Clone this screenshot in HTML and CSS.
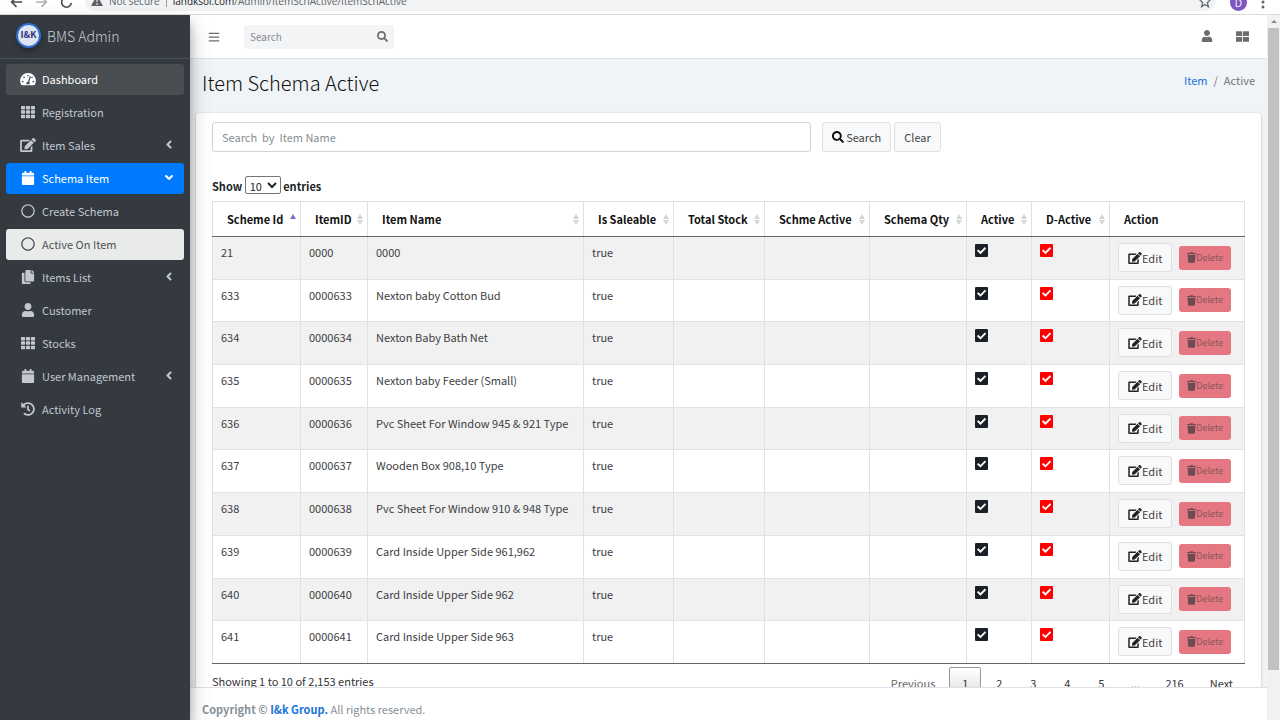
FILE: index.html
```
<!DOCTYPE html>
<html lang="en">
<head>
    <meta charset="UTF-8">
    <meta name="viewport" content="width=device-width, initial-scale=1.0">
    <title>Item Schema Active</title>
    <link rel="stylesheet" href="styles.css">
</head>
<body>
    <!-- icons shared by the menu, the navbar and the table -->
    <svg class="sprite" aria-hidden="true">
        <symbol id="i-gauge" viewBox="0 0 576 512"><path d="M288 32C129 32 0 161 0 320c0 53 14 102 39 145 6 9 16 15 27 15h444c11 0 21-6 27-15 25-43 39-92 39-145C576 161 447 32 288 32zm0 64c18 0 32 14 32 32s-14 32-32 32-32-14-32-32 14-32 32-32zM96 384c-18 0-32-14-32-32s14-32 32-32 32 14 32 32-14 32-32 32zm48-160c-18 0-32-14-32-32s14-32 32-32 32 14 32 32-14 32-32 32zm247-39l-61 184c13 12 22 28 22 47 0 12-3 23-9 32H233c-5-9-9-20-9-32 0-34 27-62 61-64l61-183c4-12 18-19 30-15s19 18 15 31zm41-25c18 0 32 14 32 32s-14 32-32 32-20-8-26-20l15-40c3-2 7-4 11-4zm48 224c-18 0-32-14-32-32s14-32 32-32 32 14 32 32-14 32-32 32z"/></symbol>
        <symbol id="i-grid" viewBox="0 0 512 512"><path d="M24 32h102c13 0 24 11 24 24v80c0 13-11 24-24 24H24c-13 0-24-11-24-24V56c0-13 11-24 24-24zm181 0h102c13 0 24 11 24 24v80c0 13-11 24-24 24H205c-13 0-24-11-24-24V56c0-13 11-24 24-24zm181 0h102c13 0 24 11 24 24v80c0 13-11 24-24 24H386c-13 0-24-11-24-24V56c0-13 11-24 24-24zM24 192h102c13 0 24 11 24 24v80c0 13-11 24-24 24H24c-13 0-24-11-24-24v-80c0-13 11-24 24-24zm181 0h102c13 0 24 11 24 24v80c0 13-11 24-24 24H205c-13 0-24-11-24-24v-80c0-13 11-24 24-24zm181 0h102c13 0 24 11 24 24v80c0 13-11 24-24 24H386c-13 0-24-11-24-24v-80c0-13 11-24 24-24zM24 352h102c13 0 24 11 24 24v80c0 13-11 24-24 24H24c-13 0-24-11-24-24v-80c0-13 11-24 24-24zm181 0h102c13 0 24 11 24 24v80c0 13-11 24-24 24H205c-13 0-24-11-24-24v-80c0-13 11-24 24-24zm181 0h102c13 0 24 11 24 24v80c0 13-11 24-24 24H386c-13 0-24-11-24-24v-80c0-13 11-24 24-24z"/></symbol>
        <symbol id="i-edit" viewBox="0 0 576 512"><path d="M402.600 83.200l90.200 90.200c3.800 3.800 3.800 10 0 13.800L274.400 405.600l-92.800 10.300c-12.400 1.400-22.900-9.100-21.500-21.500l10.300-92.800L388.800 83.200c3.800-3.800 10-3.800 13.800 0zm162-22.900l-48.800-48.800c-15.200-15.200-39.900-15.200-55.200 0l-35.400 35.400c-3.800 3.800-3.800 10 0 13.800l90.200 90.200c3.800 3.800 10 3.800 13.800 0l35.400-35.400c15.200-15.300 15.200-40 0-55.200zM384 346.200V448H64V128h229.800c3.200 0 6.200-1.300 8.500-3.500l40-40c7.600-7.600 2.200-20.500-8.500-20.500H48C21.500 64 0 85.500 0 112v352c0 26.500 21.500 48 48 48h352c26.500 0 48-21.500 48-48V306.200c0-10.700-12.900-16-20.500-8.500l-40 40c-2.200 2.300-3.500 5.300-3.500 8.500z"/></symbol>
        <symbol id="i-calendar" viewBox="0 0 448 512"><path d="M12 192h424c6.600 0 12 5.400 12 12v260c0 26.500-21.500 48-48 48H48c-26.500 0-48-21.500-48-48V204c0-6.600 5.400-12 12-12zm436-44v-36c0-26.500-21.500-48-48-48h-48V12c0-6.600-5.400-12-12-12h-40c-6.600 0-12 5.400-12 12v52H160V12c0-6.600-5.400-12-12-12h-40c-6.600 0-12 5.400-12 12v52H48C21.500 64 0 85.500 0 112v36c0 6.600 5.400 12 12 12h424c6.600 0 12-5.400 12-12z"/></symbol>
        <symbol id="i-circle" viewBox="0 0 512 512"><path d="M256 8C119 8 8 119 8 256s111 248 248 248 248-111 248-248S393 8 256 8zm0 448c-110.500 0-200-89.500-200-200S145.500 56 256 56s200 89.500 200 200-89.500 200-200 200z"/></symbol>
        <symbol id="i-copy" viewBox="0 0 448 512"><path d="M320 448v40c0 13.300-10.700 24-24 24H24c-13.300 0-24-10.700-24-24V120c0-13.300 10.700-24 24-24h72v296c0 30.900 25.100 56 56 56h168zm0-344V0H152c-13.300 0-24 10.700-24 24v368c0 13.300 10.700 24 24 24h272c13.300 0 24-10.700 24-24V128H344c-13.200 0-24-10.800-24-24zm121-31L375 7c-4.500-4.500-10.600-7-17-7h-6v96h96v-6.100c0-6.300-2.500-12.400-7-16.900z"/></symbol>
        <symbol id="i-user" viewBox="0 0 448 512"><path d="M224 256c70.700 0 128-57.300 128-128S294.700 0 224 0 96 57.300 96 128s57.300 128 128 128zm89.600 32h-16.700c-22.200 10.200-46.900 16-72.900 16s-50.600-5.800-72.900-16h-16.700C60.200 288 0 348.200 0 422.400V464c0 26.500 21.500 48 48 48h352c26.500 0 48-21.500 48-48v-41.600c0-74.200-60.200-134.400-134.400-134.400z"/></symbol>
        <symbol id="i-history" viewBox="0 0 512 512"><path d="M504 255.500c.3 136.600-111.200 248.400-247.800 248.500-59 0-113.200-20.500-155.800-54.900-11.100-8.900-11.900-25.500-1.800-35.600l11.300-11.300c8.600-8.600 22.400-9.600 31.900-2C173.100 425.100 212.800 440 256 440c101.700 0 184-82.300 184-184 0-101.700-82.300-184-184-184-48.800 0-93.100 19-126.100 49.900l50.800 50.800c10.100 10.100 2.900 27.300-11.300 27.300H24c-8.800 0-16-7.200-16-16V38.600c0-14.300 17.200-21.400 27.300-11.300l49.400 49.400C129.200 34.100 189.600 8 256 8c136.800 0 247.700 110.800 248 247.500zm-180.900 78.800l9.800-12.600c8.100-10.500 6.300-25.500-4.200-33.700L288 256.300V152c0-13.300-10.700-24-24-24h-16c-13.300 0-24 10.700-24 24v135.700l65.400 50.900c10.500 8.100 25.500 6.300 33.700-4.300z"/></symbol>
        <symbol id="i-left" viewBox="0 0 256 512"><path d="M31.700 239l136-136c9.400-9.400 24.600-9.400 33.900 0l22.600 22.600c9.400 9.400 9.400 24.600 0 33.900L127.900 256l96.400 96.400c9.400 9.400 9.400 24.600 0 33.900L201.700 409c-9.400 9.400-24.600 9.400-33.900 0l-136-136c-9.500-9.400-9.500-24.600-.1-34z"/></symbol>
        <symbol id="i-bars" viewBox="0 0 448 512"><path d="M16 132h416c9 0 16-7 16-16V92c0-9-7-16-16-16H16C7 76 0 83 0 92v24c0 9 7 16 16 16zm0 160h416c9 0 16-7 16-16v-24c0-9-7-16-16-16H16c-9 0-16 7-16 16v24c0 9 7 16 16 16zm0 160h416c9 0 16-7 16-16v-24c0-9-7-16-16-16H16c-9 0-16 7-16 16v24c0 9 7 16 16 16z"/></symbol>
        <symbol id="i-search" viewBox="0 0 512 512"><path d="M505 442.700L405.300 343c-4.500-4.500-10.600-7-17-7H372c27.600-35.300 44-79.700 44-128C416 93.100 322.900 0 208 0S0 93.100 0 208s93.100 208 208 208c48.300 0 92.700-16.400 128-44v16.300c0 6.400 2.500 12.500 7 17l99.700 99.700c9.400 9.400 24.600 9.400 33.900 0l28.300-28.300c9.400-9.400 9.400-24.600.1-34zM208 336c-70.700 0-128-57.200-128-128 0-70.700 57.200-128 128-128 70.700 0 128 57.200 128 128 0 70.700-57.200 128-128 128z"/></symbol>
        <symbol id="i-large" viewBox="0 0 512 512"><path d="M24 48h192c13 0 24 11 24 24v144c0 13-11 24-24 24H24c-13 0-24-11-24-24V72c0-13 11-24 24-24zm272 0h192c13 0 24 11 24 24v144c0 13-11 24-24 24H296c-13 0-24-11-24-24V72c0-13 11-24 24-24zM24 272h192c13 0 24 11 24 24v144c0 13-11 24-24 24H24c-13 0-24-11-24-24V296c0-13 11-24 24-24zm272 0h192c13 0 24 11 24 24v144c0 13-11 24-24 24H296c-13 0-24-11-24-24V296c0-13 11-24 24-24z"/></symbol>
        <symbol id="i-trash" viewBox="0 0 448 512"><path d="M432 32H312l-9.400-18.700A24 24 0 0 0 281.100 0H166.800a23.700 23.700 0 0 0-21.400 13.300L136 32H16A16 16 0 0 0 0 48v32a16 16 0 0 0 16 16h416a16 16 0 0 0 16-16V48a16 16 0 0 0-16-16zM32 128l21.200 339a48 48 0 0 0 47.900 45h245.800a48 48 0 0 0 47.900-45L416 128z"/></symbol>
    </svg>

    <div class="browser">
        <svg class="nav-arrow" viewBox="0 0 16 16"><path d="M15 8H2M8 2L2 8l6 6"/></svg>
        <svg class="nav-arrow faded" viewBox="0 0 16 16"><path d="M1 8h13M8 2l6 6-6 6"/></svg>
        <svg class="nav-arrow" viewBox="0 0 16 16"><path d="M13 5A6 6 0 1 0 14 9"/></svg>
        <div class="address">
            <svg class="warn" viewBox="0 0 12 12"><path d="M6 0l6 11H0z"/><path class="mark" d="M6 4v3M6 8v2"/></svg>
            <span>Not secure</span>
            <span class="divider"></span>
            <span class="url"><b>landksol.com</b>/Admin/ItemSchActive/ItemSchActive</span>
            <svg class="star" viewBox="0 0 24 24"><path d="M12 3l3 6 6 1-5 5 2 7-6-4-6 4 2-7-5-5 6-1z"/></svg>
        </div>
        <span class="profile">D</span>
        <svg class="dots" viewBox="0 0 4 16"><circle cx="2" cy="3" r="1.500"/><circle cx="2" cy="8" r="1.500"/><circle cx="2" cy="13" r="1.500"/></svg>
    </div>

    <div class="wrapper">
        <aside class="sidebar">
            <a class="brand" href="#"><span class="logo">I&amp;K</span>BMS Admin</a>
            <nav class="menu">
                <a class="hover" href="#"><svg class="icon"><use href="#i-gauge"/></svg>Dashboard</a>
                <a href="#"><svg class="icon"><use href="#i-grid"/></svg>Registration</a>
                <a href="#"><svg class="icon"><use href="#i-edit"/></svg>Item Sales<svg class="angle"><use href="#i-left"/></svg></a>
                <a class="active" href="#"><svg class="icon"><use href="#i-calendar"/></svg>Schema Item<svg class="angle open"><use href="#i-left"/></svg></a>
                <a href="#"><svg class="icon"><use href="#i-circle"/></svg>Create Schema</a>
                <a class="current" href="#"><svg class="icon"><use href="#i-circle"/></svg>Active On Item</a>
                <a href="#"><svg class="icon"><use href="#i-copy"/></svg>Items List<svg class="angle"><use href="#i-left"/></svg></a>
                <a href="#"><svg class="icon"><use href="#i-user"/></svg>Customer</a>
                <a href="#"><svg class="icon"><use href="#i-grid"/></svg>Stocks</a>
                <a href="#"><svg class="icon"><use href="#i-calendar"/></svg>User Management<svg class="angle"><use href="#i-left"/></svg></a>
                <a href="#"><svg class="icon"><use href="#i-history"/></svg>Activity Log</a>
            </nav>
        </aside>

        <div class="main">
            <header class="navbar">
                <button class="icon-btn" type="button" aria-label="Toggle menu"><svg><use href="#i-bars"/></svg></button>
                <form class="nav-search">
                    <input type="text" placeholder="Search" aria-label="Search">
                    <button class="icon-btn" type="button" aria-label="Search"><svg><use href="#i-search"/></svg></button>
                </form>
                <div class="nav-right">
                    <a href="#" aria-label="Account"><svg><use href="#i-user"/></svg></a>
                    <a href="#" aria-label="Apps"><svg class="apps"><use href="#i-large"/></svg></a>
                </div>
            </header>

            <div class="content">
                <div class="content-header">
                    <h1>Item Schema Active</h1>
                    <div class="breadcrumb"><a href="#">Item</a><span>/</span>Active</div>
                </div>
                <section class="card">
                    <form class="filter">
                        <input type="text" placeholder="Search  by  Item Name" aria-label="Search by item name">
                        <button class="btn" type="button"><svg><use href="#i-search"/></svg>Search</button>
                        <button class="btn" type="button">Clear</button>
                    </form>
                    <label class="length">Show
                        <select>
                            <option>10</option>
                            <option>25</option>
                            <option>50</option>
                        </select>
                        entries</label>
                    <table>
                        <colgroup>
                            <col class="c-id"><col class="c-item"><col><col class="c-sale"><col class="c-stock">
                            <col class="c-schme"><col class="c-qty"><col class="c-active"><col class="c-dactive"><col class="c-action">
                        </colgroup>
                        <thead>
                            <tr>
                                <th class="sort asc">Scheme Id</th>
                                <th class="sort">ItemID</th>
                                <th class="sort">Item Name</th>
                                <th class="sort">Is Saleable</th>
                                <th class="sort">Total Stock</th>
                                <th class="sort">Schme Active</th>
                                <th class="sort">Schema Qty</th>
                                <th class="sort">Active</th>
                                <th class="sort">D-Active</th>
                                <th>Action</th>
                            </tr>
                        </thead>
                        <tbody id="rows"></tbody>
                    </table>
                    <div class="table-foot">
                        <div>Showing 1 to 10 of 2,153 entries</div>
                        <div class="pages">
                            <button class="prev" type="button">Previous</button>
                            <button class="on" type="button">1</button>
                            <button type="button">2</button>
                            <button type="button">3</button>
                            <button type="button">4</button>
                            <button type="button">5</button>
                            <span>…</span>
                            <button type="button">216</button>
                            <button type="button">Next</button>
                        </div>
                    </div>
                </section>
            </div>

            <footer><strong>Copyright © <a href="#">I&amp;k Group.</a></strong> All rights reserved.</footer>
        </div>

        <div class="scrollbar"><span class="up"></span><span class="thumb"></span></div>
    </div>

    <script src="script.js"></script>
</body>
</html>
```
FILE: styles.css
```
* {
    box-sizing: border-box;
}

body {
    margin: 0;
    height: 100vh;
    display: flex;
    flex-direction: column;
    overflow: hidden;
    font-family: "Noto Sans CJK SC", "Open Sans", sans-serif;
    font-size: 11px;
    line-height: 18px;
    color: #212529;
}

a {
    color: #1a73d9;
    text-decoration: none;
}

button,
input,
select {
    font-family: inherit;
    font-size: inherit;
    line-height: inherit;
    color: inherit;
}

svg {
    fill: currentColor;
    flex: none;
}

.sprite {
    display: none;
}

/* browser bar */
.browser {
    flex: none;
    height: 15px;
    display: flex;
    align-items: flex-end;
    gap: 12px;
    padding: 0 15px 3px 10px;
    overflow: hidden;
    background: #fff;
    border-bottom: 1px solid #dcdcdc;
    font-family: "Open Sans", sans-serif;
    font-size: 10px;
    color: #5f6368;
}

.nav-arrow {
    width: 13px;
    height: 18px;
    fill: none;
    stroke: #4a4d51;
    stroke-width: 2;
}

.faded {
    stroke: #b0b3b6;
}

.address {
    flex: 1;
    height: 20px;
    display: flex;
    align-items: center;
    gap: 6px;
    padding: 0 4px 0 6px;
    border-radius: 10px;
    background: #f1f3f4;
}

.warn {
    width: 12px;
    height: 12px;
}

.mark {
    stroke: #fff;
}

.divider {
    width: 1px;
    height: 12px;
    background: #9aa0a6;
}

.url {
    flex: 1;
}

.url b {
    font-weight: 400;
    color: #202124;
}

.star {
    width: 14px;
    height: 14px;
    fill: none;
    stroke: #5f6368;
    stroke-width: 2;
}

.profile {
    width: 17px;
    height: 17px;
    margin: 0 2px;
    border-radius: 50%;
    background: #7e57c2;
    color: #fff;
    text-align: center;
}

.dots {
    width: 4px;
    height: 18px;
}

/* layout */
.wrapper {
    flex: 1;
    min-height: 0;
    display: flex;
}

.sidebar {
    position: relative;
    z-index: 1;
    flex: none;
    width: 190px;
    background: #343a40;
    color: #c2c7d0;
    box-shadow: 0 10px 20px rgba(0, 0, 0, .25), 0 8px 8px rgba(0, 0, 0, .2);
}

.brand {
    display: flex;
    align-items: center;
    gap: 6px;
    height: 44px;
    padding: 0 16px 2px;
    border-bottom: 1px solid #4b545c;
    color: #c9ccd0;
    font-size: 14px;
    font-weight: 300;
}

.logo {
    width: 25px;
    height: 25px;
    border: 2px solid #2f6fd0;
    border-radius: 50%;
    background: #dfe4f2;
    color: #2c2f7c;
    font-size: 9px;
    font-weight: 700;
    line-height: 19px;
    text-align: center;
    box-shadow: 0 3px 6px rgba(0, 0, 0, .3);
}

.menu {
    display: flex;
    flex-direction: column;
    gap: 2px;
    padding: 5px 6px;
}

.menu a {
    display: flex;
    align-items: center;
    height: 31px;
    padding: 0 10px 2px 14px;
    border-radius: 3px;
    color: #c2c7d0;
}

.menu .icon {
    width: 16px;
    height: 14px;
    margin-right: 6px;
}

.angle {
    width: 10px;
    height: 13px;
    margin-left: auto;
}

.open {
    transform: rotate(-90deg);
}

.menu .hover {
    background: #494e53;
    color: #fff;
}

.menu .active {
    background: #007bff;
    color: #fff;
}

.menu .current {
    background: #e9eaea;
    color: #4c5157;
}

.main {
    flex: 1;
    min-width: 0;
    display: flex;
    flex-direction: column;
}

.navbar {
    flex: none;
    display: flex;
    align-items: center;
    height: 44px;
    padding: 0 18px;
    background: #fff;
    border-bottom: 1px solid #dee2e6;
    color: #6c6c6c;
}

.icon-btn {
    display: flex;
    padding: 0;
    border: 0;
    background: none;
}

.navbar svg {
    width: 12px;
    height: 12px;
}

.navbar .apps {
    width: 13px;
    height: 13px;
}

.nav-search {
    display: flex;
    align-items: center;
    width: 150px;
    height: 24px;
    margin-left: 24px;
    padding: 0 6px;
    border-radius: 3px;
    background: #f2f4f6;
}

.nav-search input {
    flex: 1;
    min-width: 0;
    padding: 0;
    border: 0;
    background: none;
    font-size: 10px;
}

.nav-search svg {
    width: 11px;
    height: 11px;
}

.nav-right {
    display: flex;
    gap: 23px;
    margin-left: auto;
}

.nav-right a {
    display: flex;
    color: #6c6c6c;
}

.content {
    flex: 1;
    min-height: 0;
    overflow: hidden;
    padding: 0 6px;
    background: #f0f4f7;
}

.content-header {
    display: flex;
    justify-content: space-between;
    height: 54px;
    padding: 12px 6px;
}

h1 {
    margin: 0;
    font-size: 20px;
    font-weight: 300;
    line-height: 24px;
    color: #111;
}

.breadcrumb {
    color: #6c757d;
}

.breadcrumb span {
    margin: 0 6px;
}

.card {
    padding: 9px 16px;
    border-radius: 3px;
    background: #fff;
    box-shadow: 0 0 1px rgba(0, 0, 0, .2), 0 1px 3px rgba(0, 0, 0, .2);
}

.filter {
    display: flex;
    gap: 3px;
}

.filter input {
    width: 58%;
    height: 30px;
    margin-right: 8px;
    padding: 0 9px;
    border: 1px solid #ced4da;
    border-radius: 3px;
}

::placeholder {
    color: #868c91;
    white-space: pre;
}

.btn {
    display: inline-flex;
    align-items: center;
    gap: 2px;
    height: 30px;
    padding: 0 9px;
    border: 1px solid #dddfe1;
    border-radius: 3px;
    background: #f8f9fa;
    color: #444;
}

.btn svg {
    width: 12px;
    height: 12px;
    color: #111;
}

.length {
    display: block;
    margin: 24px 0 6px;
    font-weight: 700;
}

.length select {
    width: 36px;
    height: 18px;
    padding: 0;
    border: 1px solid #767676;
    border-radius: 2px;
    background: #fff;
    font-weight: 400;
}

/* table */
table {
    width: 100%;
    height: 463px;
    table-layout: fixed;
    border-collapse: collapse;
    border: 1px solid #dee2e6;
}

.c-id { width: 88px; }
.c-item { width: 67px; }
.c-sale { width: 90px; }
.c-stock { width: 91px; }
.c-schme { width: 105px; }
.c-qty { width: 97px; }
.c-active { width: 65px; }
.c-dactive { width: 78px; }
.c-action { width: 135px; }

th,
td {
    border: 1px solid #dee2e6;
    text-align: left;
    white-space: nowrap;
}

th {
    position: relative;
    height: 35px;
    padding: 0 14px;
    border-bottom: 1px solid #666;
    color: #111;
}

/* sort arrows at the right edge of a heading */
.sort::before,
.sort::after {
    content: "";
    position: absolute;
    right: 4px;
    border: 3px solid transparent;
}

.sort::before {
    top: 9px;
    border-bottom: 5px solid #d5d5d5;
}

.sort::after {
    top: 18px;
    border-top: 5px solid #d5d5d5;
}

.asc::before {
    border-bottom-color: #7472c9;
}

.asc::after {
    display: none;
}

td {
    height: 42px;
    padding: 6px 8px 0;
    vertical-align: top;
    color: #3c4043;
}

tbody tr:nth-child(odd) {
    background: #f1f1f1;
}

tbody tr:last-child td {
    border-bottom: 1px solid #666;
}

.tick {
    display: block;
    appearance: none;
    width: 13px;
    height: 13px;
    margin: 1px 0 0;
    border-radius: 1px;
    background: #1b2026;
}

.tick::before {
    content: "";
    display: block;
    width: 13px;
    height: 13px;
    background: #fff;
    clip-path: polygon(15% 52%, 25% 42%, 42% 58%, 76% 24%, 86% 34%, 42% 78%);
}

.red {
    background: #f00;
}

.actions {
    display: flex;
    align-items: center;
    gap: 7px;
}

.actions .btn {
    gap: 0;
    height: 29px;
}

.actions .btn svg {
    width: 14px;
    color: #222;
}

.actions .delete {
    height: 24px;
    padding: 0 8px;
    border: 0;
    background: #e57782;
    color: #85575c;
    font-size: 9px;
}

.actions .delete svg {
    width: 9px;
    height: 11px;
    color: #6b4c50;
}

.table-foot {
    display: flex;
    justify-content: space-between;
    padding-top: 3px;
    line-height: 28px;
    color: #333;
}

.pages {
    display: flex;
    gap: 2px;
}

.pages button,
.pages span {
    min-width: 32px;
    height: 32px;
    padding: 0 11px;
    border: 1px solid transparent;
    border-radius: 2px;
    background: none;
    text-align: center;
}

.pages span {
    padding: 0;
    font-family: "Open Sans", sans-serif;
    line-height: 32px;
}

.pages .prev {
    color: #666;
}

.pages .on {
    border-color: #979797;
    background: linear-gradient(#fff, #dcdcdc);
}

footer {
    flex: none;
    height: 33px;
    padding: 12px 12px 0;
    border-top: 1px solid #dee2e6;
    background: #fff;
    color: #869099;
}

/* page scrollbar */
.scrollbar {
    flex: none;
    width: 13px;
    background: #f1f1f1;
}

.scrollbar span {
    display: block;
}

.up {
    width: 6px;
    margin: 5px auto 5px;
    border: 3px solid transparent;
    border-top: 0;
    border-bottom-color: #8a8a8a;
}

.thumb {
    height: 91%;
    margin: 0 1px;
    background: #c1c1c1;
}
```
FILE: script.js
```
const items = [
    ["21", "0000", "0000"],
    ["633", "0000633", "Nexton baby Cotton Bud"],
    ["634", "0000634", "Nexton Baby Bath Net"],
    ["635", "0000635", "Nexton baby Feeder (Small)"],
    ["636", "0000636", "Pvc Sheet For Window 945 & 921 Type"],
    ["637", "0000637", "Wooden Box 908,10 Type"],
    ["638", "0000638", "Pvc Sheet For Window 910 & 948 Type"],
    ["639", "0000639", "Card Inside Upper Side 961,962"],
    ["640", "0000640", "Card Inside Upper Side 962"],
    ["641", "0000641", "Card Inside Upper Side 963"]
];

const rows = document.getElementById("rows");

items.forEach(([id, itemId, name]) => {
    const tr = document.createElement("tr");
    tr.innerHTML = `
        <td>${id}</td>
        <td>${itemId}</td>
        <td>${name.replace("&", "&amp;")}</td>
        <td>true</td>
        <td></td>
        <td></td>
        <td></td>
        <td><input class="tick" type="checkbox" checked aria-label="Active ${id}"></td>
        <td><input class="tick red" type="checkbox" checked aria-label="D-Active ${id}"></td>
        <td>
            <div class="actions">
                <button class="btn" type="button"><svg><use href="#i-edit"/></svg>Edit</button>
                <button class="btn delete" type="button"><svg><use href="#i-trash"/></svg>Delete</button>
            </div>
        </td>`;
    rows.appendChild(tr);
});
```
